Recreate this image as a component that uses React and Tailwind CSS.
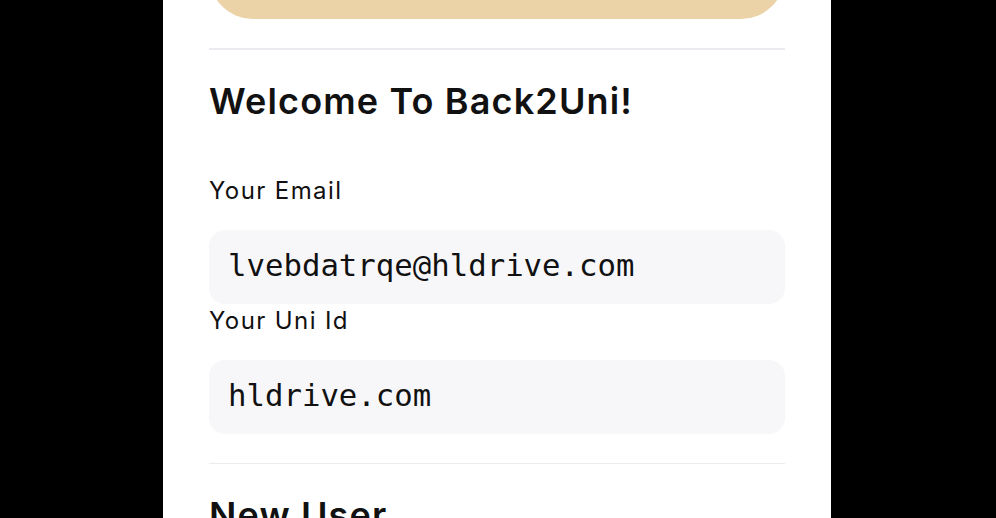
export default function App() {
  return (
    <div className="h-[518px] overflow-hidden bg-black flex">
      <div className="ml-[163px] w-[668px] bg-white px-[46px] flex flex-col shrink-0">
        <button
          type="button"
          className="mt-[-69px] h-[88px] w-full rounded-full bg-[#ecd3a7] shrink-0"
        />

        <div className="mt-[29px] h-[1.5px] bg-[#ebebf0] shrink-0" />

        <section className="flex flex-col">
          <h2 className="mt-[31px] font-['Inter',sans-serif] text-[36px] leading-[40px] font-semibold tracking-[1.15px] text-[#111]">
            Welcome To Back2Uni!
          </h2>

          <label className="mt-[54px] font-['Inter',sans-serif] text-[24px] leading-[32px] tracking-[1.4px] text-[#111]">
            Your Email
          </label>
          <div className="mt-[23px] h-[74px] rounded-2xl bg-[#f7f7f9] pl-[19px] flex items-center font-['DejaVu_Sans_Mono',monospace] text-[30.7px] text-[#111]">
            lvebdatrqe@hldrive.com
          </div>

          <label className="mt-[1px] font-['Inter',sans-serif] text-[24px] leading-[32px] tracking-[1.4px] text-[#111]">
            Your Uni Id
          </label>
          <div className="mt-[23px] h-[74px] rounded-2xl bg-[#f7f7f9] pl-[19px] flex items-center font-['DejaVu_Sans_Mono',monospace] text-[30.7px] text-[#111]">
            hldrive.com
          </div>
        </section>

        <div className="mt-[29px] h-[1.5px] bg-[#ebebf0] shrink-0" />

        <section>
          <h2 className="mt-[31px] font-['Inter',sans-serif] text-[36px] leading-[40px] font-semibold tracking-[1.15px] text-[#111]">
            New User
          </h2>
        </section>
      </div>
    </div>
  );
}
